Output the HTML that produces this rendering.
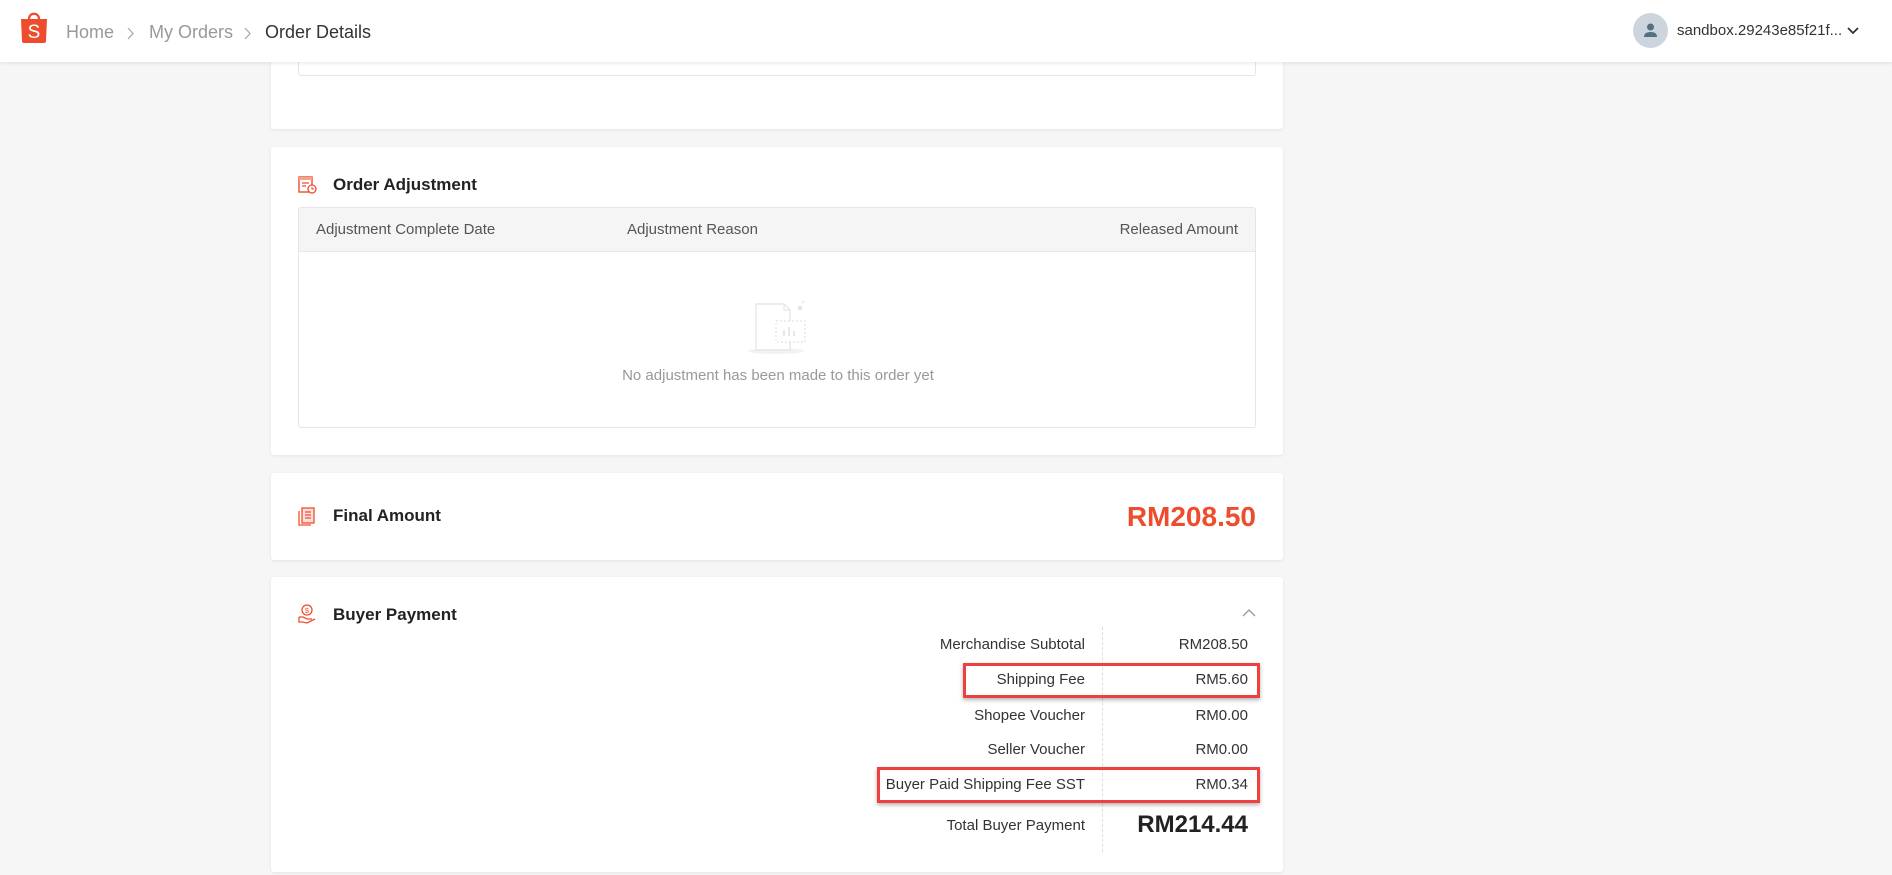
<!DOCTYPE html>
<html><head><meta charset="utf-8"><style>
*{margin:0;padding:0;box-sizing:border-box}
body{width:1892px;height:875px;background:#f6f6f6;font-family:"Liberation Sans",Arial,sans-serif;color:#333;position:relative;overflow:hidden}
.hdr{position:absolute;left:0;top:0;width:1892px;height:62px;background:#fff;box-shadow:0 1px 4px rgba(0,0,0,.1);z-index:5}
.abs{position:absolute}
.card{position:absolute;left:271px;width:1012px;background:#fff;border-radius:3px;box-shadow:0 1px 3px rgba(0,0,0,.08)}
.title{position:absolute;left:62px;font-size:17px;font-weight:bold;color:#222;line-height:20px}
.icon{position:absolute;left:27px}
.row{position:absolute;font-size:15px;line-height:18px;color:#333}
.lab{right:198px;text-align:right}
.val{right:35px;text-align:right}
.box{position:absolute;border:3px solid #ef4040;box-shadow:0 2px 4px rgba(0,0,0,.3)}
</style></head><body>
<div class="hdr">
 <svg class="abs" style="left:20px;top:10px" width="28" height="33" viewBox="0 0 28 33"><path d="M9 9 C9 2 19 2 19 9" fill="none" stroke="#ee4d2d" stroke-width="2.2"/><path d="M1 9 H27 L26 31 Q26 33 24 33 H4 Q2 33 2 31 Z" fill="#ee4d2d"/><text x="14" y="28" font-size="19" fill="#fff" text-anchor="middle" font-family="Liberation Sans">S</text></svg>
 <div class="abs" style="left:66px;top:22px;font-size:18px;color:#999">Home</div>
 <svg class="abs" style="left:126px;top:27px" width="9" height="13" viewBox="0 0 9 13"><path d="M2 1 L7 6.5 L2 12" fill="none" stroke="#aaa" stroke-width="1.3"/></svg>
 <div class="abs" style="left:149px;top:22px;font-size:18px;color:#999">My Orders</div>
 <svg class="abs" style="left:243px;top:27px" width="9" height="13" viewBox="0 0 9 13"><path d="M2 1 L7 6.5 L2 12" fill="none" stroke="#aaa" stroke-width="1.3"/></svg>
 <div class="abs" style="left:265px;top:22px;font-size:18px;color:#333">Order Details</div>
 <div class="abs" style="left:1633px;top:13px;width:35px;height:35px;border-radius:50%;background:#ccd5dd"></div>
 <svg class="abs" style="left:1641px;top:21px" width="19" height="19" viewBox="0 0 19 19"><circle cx="9.5" cy="6" r="3.5" fill="#557080"/><path d="M3 16 Q3 11 9.5 11 Q16 11 16 16 Z" fill="#557080"/></svg>
 <div class="abs" style="left:1677px;top:22px;font-size:15px;color:#333">sandbox.29243e85f21f...</div>
 <svg class="abs" style="left:1846px;top:26px" width="14" height="10" viewBox="0 0 14 10"><path d="M2 2 L7 7 L12 2" fill="none" stroke="#333" stroke-width="1.8"/></svg>
</div>

<div class="card" style="top:40px;height:89px">
 <div class="abs" style="left:27px;top:0;width:958px;height:36px;border:1px solid #e5e5e5;border-top:none;border-radius:0 0 3px 3px"></div>
</div>

<div class="card" style="top:147px;height:308px">
 <svg class="icon" style="top:29px" width="19" height="18" viewBox="0 0 19 18"><rect x="1" y="1" width="13" height="15" fill="none" stroke="#ee4d2d" stroke-width="1.4"/><rect x="1" y="1" width="13" height="3" fill="#f7a08c"/><path d="M4 7h7M4 10h4" stroke="#ee4d2d" stroke-width="1.3"/><circle cx="14" cy="13" r="4" fill="#fff" stroke="#ee4d2d" stroke-width="1.3"/><path d="M14 11v2h2" stroke="#ee4d2d" stroke-width="1.1" fill="none"/></svg>
 <div class="title" style="top:28px">Order Adjustment</div>
 <div class="abs" style="left:27px;top:60px;width:958px;height:221px;border:1px solid #e5e5e5;border-radius:3px;overflow:hidden">
  <div style="height:44px;background:#f5f5f5;border-bottom:1px solid #e8e8e8;position:relative;font-size:15px;color:#555">
   <span class="abs" style="left:17px;top:13px">Adjustment Complete Date</span>
   <span class="abs" style="left:328px;top:13px">Adjustment Reason</span>
   <span class="abs" style="right:17px;top:13px">Released Amount</span>
  </div>
  <svg class="abs" style="left:444px;top:90px" width="70" height="60" viewBox="0 0 70 60"><ellipse cx="33" cy="53" rx="28" ry="3" fill="#f2f2f2"/><path d="M13 6 H41 L47 12 V52 H13 Z" fill="#fff" stroke="#e2e2e2" stroke-width="1.2"/><path d="M41 6 V12 H47" fill="none" stroke="#e2e2e2"/><rect x="33" y="23" width="29" height="21" fill="#fff" stroke="#ddd" stroke-dasharray="2 2"/><path d="M41 38v-6M46 38v-9M51 38v-5" stroke="#ddd" stroke-width="1.4"/><circle cx="57" cy="10" r="2" fill="#e0e0e0"/><circle cx="60" cy="4" r="1.5" fill="#eee"/></svg>
  <div class="abs" style="left:0;width:958px;top:159px;text-align:center;font-size:15px;color:#999">No adjustment has been made to this order yet</div>
 </div>
</div>

<div class="card" style="top:473px;height:87px">
 <svg class="icon" style="top:34px" width="18" height="19" viewBox="0 0 18 19"><rect x="4" y="1" width="12" height="15" fill="#fdd" stroke="#ee4d2d" stroke-width="1.3"/><path d="M1 4v14h12" fill="none" stroke="#ee4d2d" stroke-width="1.3"/><path d="M7 5h6M7 8h6M7 11h6" stroke="#ee4d2d" stroke-width="1.2"/></svg>
 <div class="title" style="top:33px">Final Amount</div>
 <div class="abs" style="right:27px;top:28px;font-size:28px;font-weight:bold;color:#ee4d2d">RM208.50</div>
</div>

<div class="card" style="top:577px;height:295px">
 <svg class="icon" style="top:27px" width="18" height="20" viewBox="0 0 18 20"><circle cx="9" cy="6" r="5" fill="none" stroke="#ee4d2d" stroke-width="1.3"/><text x="9" y="9" font-size="7" fill="#ee4d2d" text-anchor="middle" font-family="Liberation Sans">$</text><path d="M1 13h4l4 2h5M1 13v5h3l5 1 8-4" fill="none" stroke="#ee4d2d" stroke-width="1.3"/></svg>
 <div class="title" style="top:28px">Buyer Payment</div>
 <svg class="abs" style="left:971px;top:31px" width="14" height="9" viewBox="0 0 14 9"><path d="M1 8 L7 2 L13 8" fill="none" stroke="#999" stroke-width="1.3"/></svg>
 <div class="abs" style="left:831px;top:50px;height:225px;border-left:1px dashed #ddd"></div>
 <div class="row lab" style="top:59px">Merchandise Subtotal</div><div class="row val" style="top:59px">RM208.50</div>
 <div class="row lab" style="top:94px">Shipping Fee</div><div class="row val" style="top:94px">RM5.60</div>
 <div class="row lab" style="top:130px">Shopee Voucher</div><div class="row val" style="top:130px">RM0.00</div>
 <div class="row lab" style="top:164px">Seller Voucher</div><div class="row val" style="top:164px">RM0.00</div>
 <div class="row lab" style="top:199px">Buyer Paid Shipping Fee SST</div><div class="row val" style="top:199px">RM0.34</div>
 <div class="row lab" style="top:240px">Total Buyer Payment</div><div class="row val" style="top:234px;font-size:24px;font-weight:bold;line-height:28px;color:#222">RM214.44</div>
</div>

<div class="box" style="left:963px;top:663px;width:297px;height:35px"></div>
<div class="box" style="left:877px;top:767px;width:383px;height:36px"></div>
</body></html>
